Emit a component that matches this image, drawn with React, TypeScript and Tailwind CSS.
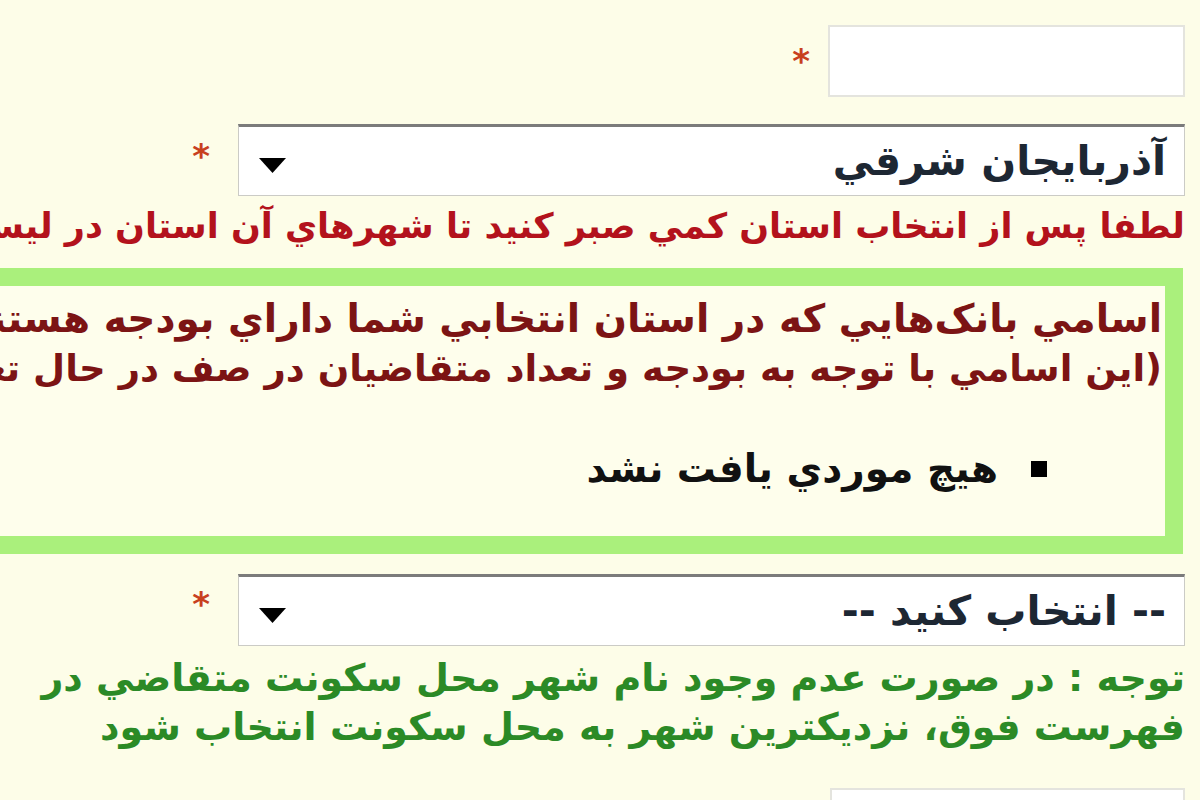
import React from "react";

function Asterisk({ className = "" }: { className?: string }) {
  return (
    <span className={`text-[34px] font-bold leading-none text-[#c8401e] ${className}`}>*</span>
  );
}

function FakeSelect({ value }: { value: string }) {
  return (
    <div className="flex h-[72px] w-[947px] shrink-0 items-center justify-between border border-[#cbcbc6] border-t-[3px] border-t-[#7b7b7b] bg-white pl-[20px] pr-[18px]">
      <span className="text-[41px] font-bold leading-none text-[#1d2733]">{value}</span>
      <svg width="27" height="15" viewBox="0 0 27 15" className="mt-[8px]">
        <path d="M0 0H27L13.5 15Z" fill="#000" />
      </svg>
    </div>
  );
}

export default function App() {
  return (
    <div
      dir="rtl"
      className="min-h-screen overflow-hidden bg-[#fdfde8] pr-[15px] pt-[25px] font-['DejaVu_Sans','Noto_Sans',sans-serif] font-bold"
    >
      {/* نام */}
      <div className="flex items-center gap-[18px]">
        <div className="h-[72px] w-[357px] shrink-0 border-2 border-[#e4e4de] bg-white" />
        <Asterisk />
      </div>

      {/* استان */}
      <div className="mt-[27px] flex items-center gap-[28px]">
        <FakeSelect value="آذربايجان شرقي" />
        <Asterisk className="-mt-[8px]" />
      </div>
      <div className="whitespace-nowrap pt-[2px] text-[35px] leading-[56px] text-[#b3121c]">
        لطفا پس از انتخاب استان كمي صبر كنيد تا شهرهاي آن استان در ليست نمايش داده شوند
      </div>

      {/* بانک‌ها */}
      <div className="mr-[2px] mt-[14px] w-[1400px] border-[18px] border-[#aaf07c] bg-[#fefeec] pb-[42px] pr-[3px] pt-[8px]">
        <div className="whitespace-nowrap leading-[50px] text-[#7c1414]">
          <div className="text-[39px]">
            اسامي بانک‌هايي كه در استان انتخابي شما داراي بودجه هستند به شرح زير مي‌باشد
          </div>
          <div className="text-[37px]">
            (اين اسامي با توجه به بودجه و تعداد متقاضيان در صف در حال تغيير مي‌باشد)
          </div>
        </div>
        <ul className="mt-[50px] pr-[115px]">
          <li className="flex items-center gap-[33px] text-[39px] leading-[50px] text-[#111]">
            <span className="h-[16px] w-[16px] shrink-0 bg-black" />
            <span>هيچ موردي يافت نشد</span>
          </li>
        </ul>
      </div>

      {/* شهر */}
      <div className="mt-[20px] flex items-center gap-[28px]">
        <FakeSelect value="-- انتخاب كنيد --" />
        <Asterisk className="-mt-[12px]" />
      </div>
      <div className="w-[1165px] pt-[8px] text-[38px] leading-[49px] text-[#2b8a26]">
        توجه : در صورت عدم وجود نام شهر محل سكونت متقاضي در
        <br />
        فهرست فوق، نزديكترين شهر به محل سكونت انتخاب شود
      </div>

      <div className="mt-[36px] h-[72px] w-[355px] border-2 border-[#e4e4de] bg-white" />
    </div>
  );
}
